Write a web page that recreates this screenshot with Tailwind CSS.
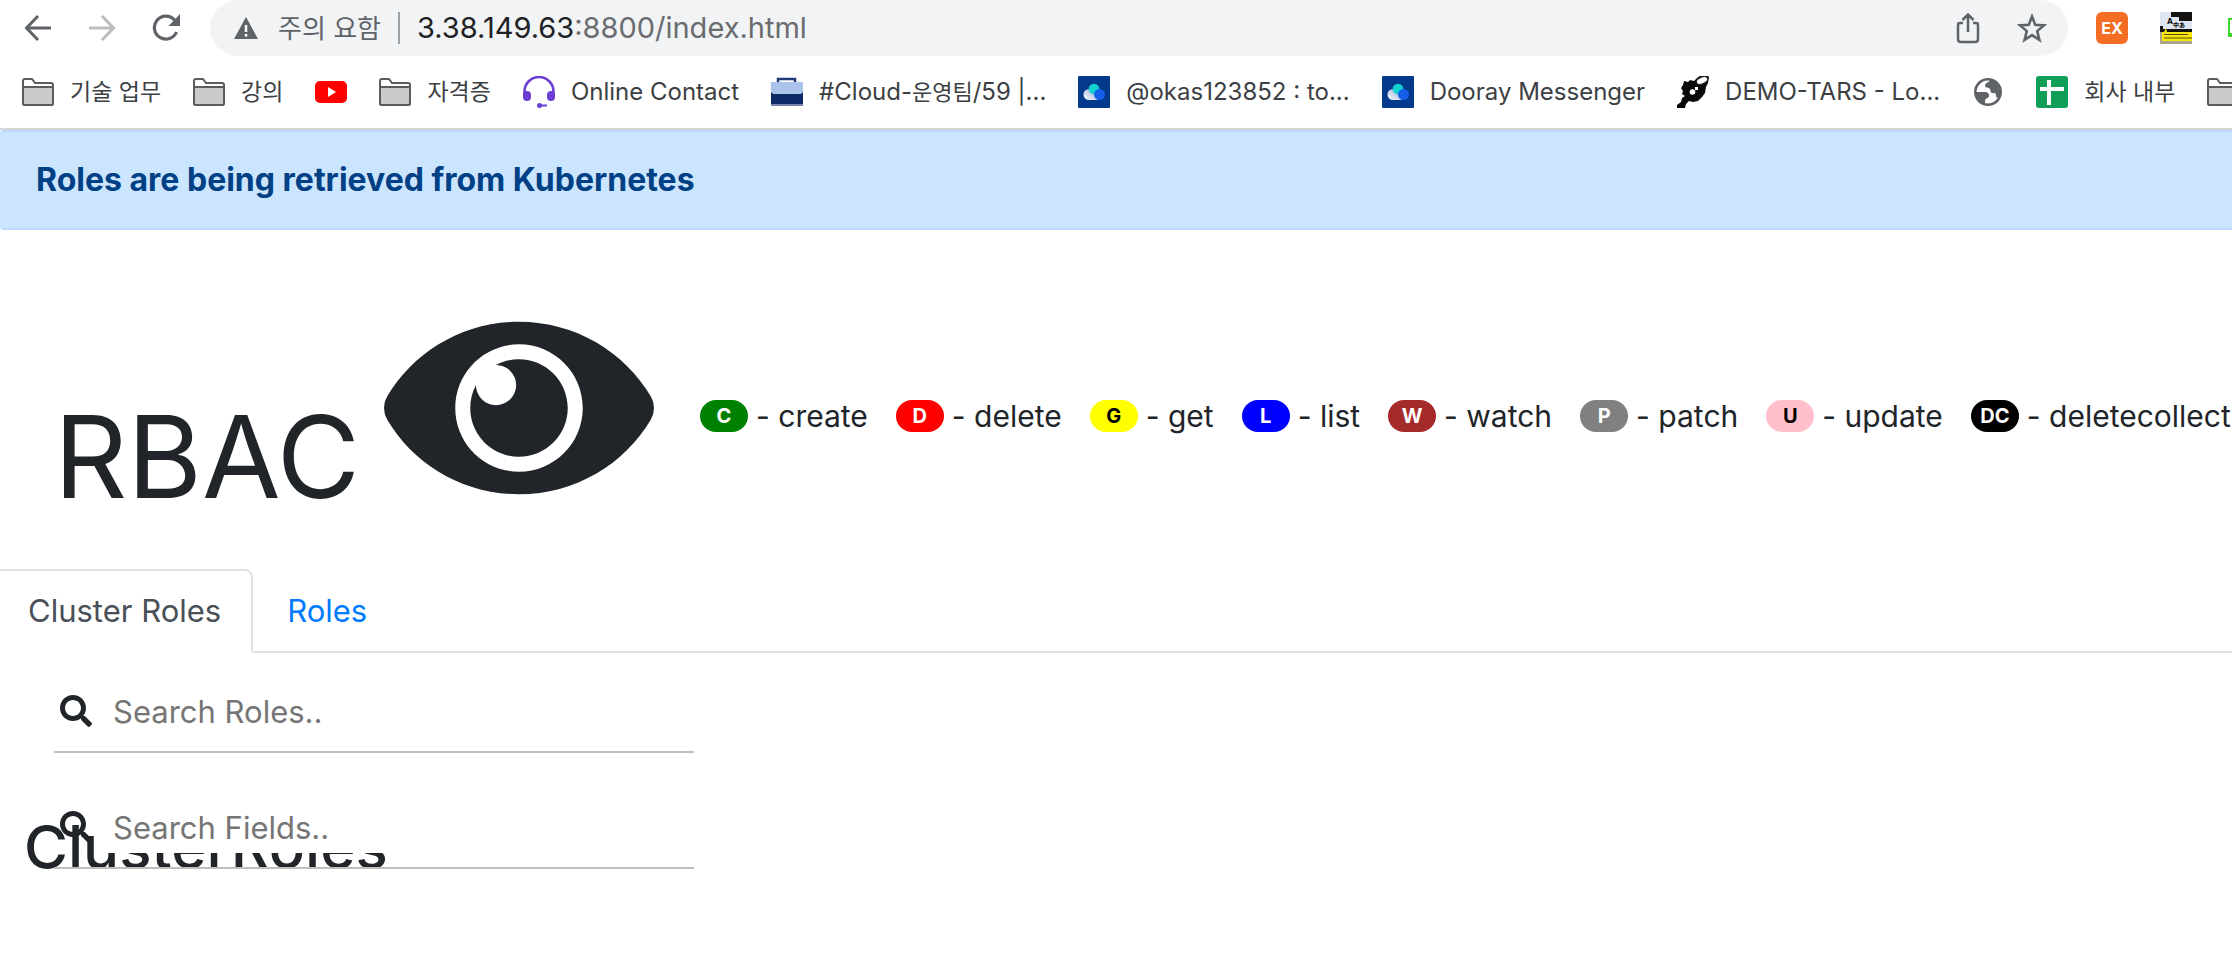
<!DOCTYPE html>
<html lang="ko">

<head>
  <meta charset="UTF-8" />
  <meta name="viewport" content="width=device-width, initial-scale=1.0" />
  <title>RBAC View</title>
  <script src="https://cdn.jsdelivr.net/npm/@tailwindcss/browser@4"></script>
</head>

<body class="bg-white text-[#212529] font-[Inter,'Noto_Sans_CJK_KR',sans-serif] text-[31px] overflow-x-hidden">

  <!-- Icons used more than once -->
  <svg class="absolute w-0 h-0">
    <linearGradient id="cloud" x1="1" y1="0" x2="0" y2="1"><stop offset="0" stop-color="#8fa3d0" /><stop offset="1" stop-color="#fff" /></linearGradient>
    <symbol id="folder" viewBox="0 0 32 28">
      <path d="M1 25V3q0-2 2-2h7l3 4h16q2 0 2 2v18q0 2-2 2H3q-2 0-2-2z" fill="#fff" stroke="#5b5c5e" stroke-width="2" />
      <path d="M1 9h30v16q0 2-2 2H3q-2 0-2-2z" fill="#cbcbcb" stroke="#5b5c5e" stroke-width="2" />
    </symbol>
    <symbol id="dooray" viewBox="0 0 32 32">
      <rect width="32" height="32" rx="1" fill="#043a8c" />
      <path d="M11 13a5.500 5.500 0 0 0 0 11h9V13z" fill="url(#cloud)" />
      <circle cx="16" cy="13" r="5.300" fill="#12d2cf" />
      <circle cx="21.500" cy="18.500" r="5.500" fill="#145eea" />
    </symbol>
    <symbol id="search" viewBox="0 0 512 512">
      <path fill="currentColor" d="M505 442.700L405.300 343c-4.500-4.500-10.600-7-17-7H372c27.600-35.300 44-79.700 44-128C416 93.100 322.900 0 208 0S0 93.100 0 208s93.100 208 208 208c48.300 0 92.700-16.400 128-44v16.300c0 6.400 2.500 12.500 7 17l99.700 99.700c9.400 9.400 24.600 9.400 33.900 0l28.300-28.300c9.400-9.400 9.400-24.600.1-34zM208 336c-70.700 0-128-57.200-128-128 0-70.700 57.200-128 128-128 70.700 0 128 57.200 128 128 0 70.700-57.200 128-128 128z" />
    </symbol>
  </svg>

  <!-- Browser toolbar -->
  <div class="flex items-center h-14 pl-6 overflow-hidden text-[#5f6368]">
    <button aria-label="Back" class="shrink-0 mr-9">
      <svg class="w-7 h-7" viewBox="0 0 28 28" fill="none" stroke="#5f6368" stroke-width="3"><path d="M27 14H3M14 2L2.500 14 14 26" /></svg>
    </button>
    <button aria-label="Forward" class="shrink-0 mr-9">
      <svg class="w-7 h-7" viewBox="0 0 28 28" fill="none" stroke="#bbbdbf" stroke-width="3"><path d="M1 14h24M14 2l11.500 12L14 26" /></svg>
    </button>
    <button aria-label="Reload" class="shrink-0 mr-[30px]">
      <svg class="w-7 h-7" viewBox="0 0 28 28"><path d="M22.500 6A11.500 11.500 0 1 0 24.500 18" fill="none" stroke="#5f6368" stroke-width="3.200" /><path d="M28 0v12H16.500z" fill="#5f6368" /></svg>
    </button>
    <div class="flex items-center flex-1 h-14 pl-6 pr-5 rounded-full bg-[#f1f3f4] text-[26px]">
      <svg class="w-6 h-6 mr-5" viewBox="0 0 24 24"><path d="M12 1l12 22H0z" fill="#5f6368" /><path d="M10.800 9h2.500v7h-2.500zM10.800 18h2.500v2.500h-2.500z" fill="#fff" /></svg>
      <span>주의 요함</span>
      <span class="w-[2px] h-8 mx-[17px] bg-[#9aa0a6]"></span>
      <span class="text-[#202124] text-[29px]">3.38.149.63<span class="text-[#6a6c6f]">:8800/index.html</span></span>
      <button aria-label="Share" class="ml-auto mr-9">
        <svg class="w-6 h-8" viewBox="0 0 24 32" fill="none" stroke="#5f6368" stroke-width="2.500"><path d="M7 11H4q-2 0-2 2v14q0 3 3 3h14q3 0 3-3V13q0-2-2-2h-3M12 20V3M6.500 8L12 2.500 17.500 8" /></svg>
      </button>
      <button aria-label="Bookmark this page">
        <svg class="w-8 h-8" viewBox="0 0 32 32" fill="none" stroke="#5f6368" stroke-width="2.600"><path d="M16 4.500l3.200 8.200 8.800.7-6.800 5.700 2.200 8.700-7.400-4.700-7.400 4.700 2.200-8.700L4 13.400l8.800-.7z" /></svg>
      </button>
    </div>
    <div class="flex items-center gap-8 pl-7 shrink-0">
      <button class="w-8 h-8 rounded-md bg-[#f36d24] text-white text-base font-bold">EX</button>
      <svg class="w-8 h-8" viewBox="0 0 32 32">
        <rect width="32" height="32" fill="#a9a48c" /><rect width="32" height="20" fill="#15130f" />
        <path d="M0 0h11v5h8v4h13v8H3V14H0z" fill="#dfe5f2" />
        <path d="M2 20h2l2-4 1 4h25v9H2z" fill="#f7e60a" />
        <path d="M4 22.500h24M4 26h28" stroke="#554f10" stroke-width="1" />
        <text x="7" y="12" font-size="8" font-weight="700" fill="#000">A</text>
        <text x="13" y="15" font-size="6" font-weight="700" fill="#000" font-family="Noto Sans CJK JP">中あ</text>
      </svg>
      <svg class="w-4 h-5 ml-1 -mr-3" viewBox="0 0 16 20"><rect x="1" y="1" width="20" height="17" fill="#fff" stroke="#3bd32c" stroke-width="2" /><path d="M0 15h16v4H0z" fill="#3bd32c" /></svg>
    </div>
  </div>

  <!-- Bookmarks bar -->
  <nav class="flex items-center gap-8 h-[74px] pl-[22px] border-b-2 border-[#d5d7da] overflow-hidden whitespace-nowrap text-2xl text-[#3c4043]">
    <a href="#" class="flex items-center shrink-0 text-[23px]"><svg class="w-8 h-7 mr-4"><use href="#folder" /></svg>기술 업무</a>
    <a href="#" class="flex items-center shrink-0 text-[23px]"><svg class="w-8 h-7 mr-4"><use href="#folder" /></svg>강의</a>
    <a href="#" aria-label="YouTube" class="shrink-0"><svg class="w-8 h-6" viewBox="0 0 32 24"><rect y="1" width="32" height="22" rx="5" fill="#f00" /><path d="M13 7l8 5-8 5z" fill="#fff" /></svg></a>
    <a href="#" class="flex items-center shrink-0 text-[23px]"><svg class="w-8 h-7 mr-4"><use href="#folder" /></svg>자격증</a>
    <a href="#" class="flex items-center shrink-0">
      <svg class="w-8 h-8 mr-4" viewBox="0 0 32 32"><path d="M1.500 19v-3.500a14.500 14.500 0 0 1 29 0V19" fill="none" stroke="#6b3fd4" stroke-width="2.600" /><rect y="15" width="8" height="10" rx="4" fill="#6b3fd4" /><rect x="24" y="15" width="8" height="10" rx="4" fill="#6b3fd4" /><circle cx="16.500" cy="29.500" r="2.500" fill="#6b3fd4" /><path d="M17 28.500h7v2h-7z" fill="#6b3fd4" /></svg>Online Contact
    </a>
    <a href="#" class="flex items-center shrink-0">
      <svg class="w-8 h-8 mr-4" viewBox="0 0 32 32"><path d="M7 7V3h17v4" fill="none" stroke="#1f3b78" stroke-width="2.500" /><path d="M0 6h32v12H0z" fill="#abc2ea" /><path d="M0 16l2 2h28l2-2v12H0z" fill="#0b2a66" /><path d="M0 28h32v2H0z" fill="#7484ab" /></svg><span>#Cloud-<span class="text-[22px]">운영팀</span>/59 |...</span>
    </a>
    <a href="#" class="flex items-center shrink-0"><svg class="w-8 h-8 mr-4"><use href="#dooray" /></svg>@okas123852 : to...</a>
    <a href="#" class="flex items-center shrink-0"><svg class="w-8 h-8 mr-4"><use href="#dooray" /></svg>Dooray Messenger</a>
    <a href="#" class="flex items-center shrink-0">
      <svg class="w-8 h-8 mr-4" viewBox="0 0 32 32"><path d="M0 32v-3l4-3 1-4 3-2-3-2 1-3-2-3 2-3 1-4 4 1 2-2 4 1 3-3 4-3h6l2 2-1 6-2 4-1 6-3 4-4 4-5 1-4-1-3 3-1 4-4 1z" fill="#0a0a0a" /><ellipse cx="25" cy="4.500" rx="6" ry="3.400" transform="rotate(-24 25 4.500)" fill="#fff" stroke="#222" stroke-width="1.300" /><circle cx="15.500" cy="16" r="2.800" fill="#fff" /><path d="M18 11h3v3h-3z" fill="#fff" /></svg>DEMO-TARS - Lo...
    </a>
    <a href="#" aria-label="Web page" class="shrink-0 px-[2px]">
      <svg class="w-7 h-7" viewBox="0 0 28 28"><circle cx="14" cy="14" r="12.700" fill="#fff" stroke="#5f6368" stroke-width="2.600" /><path d="M16 1c0 4-5 3-5 7 0 2 4 1 5 3s0 4 3 4 3 1 3 3 2 2 4 0q2-4 1-8Q24 2 16 1zM1 14h9c4 0 5 1 5 4 0 2-4 2-4 5v4Q2 24 1 14z" fill="#5f6368" /></svg>
    </a>
    <a href="#" class="flex items-center shrink-0 text-[23px]">
      <svg class="w-8 h-8 mr-4" viewBox="0 0 32 32"><rect width="32" height="32" rx="3" fill="#0f9d58" /><path d="M11 4h4v7h13v4H15v14h-4V15H4v-4h7z" fill="#fff" /></svg>회사 내부
    </a>
    <a href="#" aria-label="Folder" class="shrink-0"><svg class="w-8 h-7"><use href="#folder" /></svg></a>
  </nav>

  <!-- Status message -->
  <div role="alert" class="px-9 py-6 text-[32px] leading-[48px] font-bold text-[#004085] bg-[#cce5ff] border-y-2 border-[#b8daff] rounded-l-sm">
    Roles are being retrieved from Kubernetes
  </div>

  <!-- Title and legend -->
  <header class="flex items-center pl-[54px] pt-[58px] pb-[41px] whitespace-nowrap">
    <h1 class="shrink-0 text-[114px] leading-none">RBAC<svg class="inline-block align-[-30px] w-[270px] h-60 ml-6" viewBox="0 0 576 512" fill="currentColor"><path d="M569.354 231.631C512.969 135.949 407.810 72 288 72 168.140 72 63.004 135.994 6.646 231.631a47.999 47.999 0 0 0 0 48.739C63.031 376.051 168.190 440 288 440c119.860 0 224.996-63.994 281.354-159.631a47.997 47.997 0 0 0 0-48.738zM288 392c-75.162 0-136-60.827-136-136 0-75.162 60.826-136 136-136 75.162 0 136 60.826 136 136 0 75.162-60.826 136-136 136zm104-136c0 57.438-46.562 104-104 104s-104-46.562-104-104c0-17.708 4.431-34.379 12.236-48.973l-.001.032c0 23.651 19.173 42.823 42.824 42.823s42.824-19.173 42.824-42.823c0-23.651-19.173-42.823-42.824-42.823l-.032.001C253.621 156.431 270.292 152 288 152c57.438 0 104 46.562 104 104z" /></svg></h1>
    <ul class="flex items-center gap-7 ml-[46px] pt-4 text-[30px]">
      <li class="flex items-center gap-2"><span class="w-12 h-8 rounded-full bg-[green] text-white text-xl leading-8 font-bold text-center">C</span>- create</li>
      <li class="flex items-center gap-2"><span class="w-12 h-8 rounded-full bg-[red] text-white text-xl leading-8 font-bold text-center">D</span>- delete</li>
      <li class="flex items-center gap-2"><span class="w-12 h-8 rounded-full bg-[yellow] text-black text-xl leading-8 font-bold text-center">G</span>- get</li>
      <li class="flex items-center gap-2"><span class="w-12 h-8 rounded-full bg-[blue] text-white text-xl leading-8 font-bold text-center">L</span>- list</li>
      <li class="flex items-center gap-2"><span class="w-12 h-8 rounded-full bg-[brown] text-white text-xl leading-8 font-bold text-center">W</span>- watch</li>
      <li class="flex items-center gap-2"><span class="w-12 h-8 rounded-full bg-[gray] text-white text-xl leading-8 font-bold text-center">P</span>- patch</li>
      <li class="flex items-center gap-2"><span class="w-12 h-8 rounded-full bg-[pink] text-black text-xl leading-8 font-bold text-center">U</span>- update</li>
      <li class="flex items-center gap-2"><span class="w-12 h-8 rounded-full bg-black text-white text-xl leading-8 font-bold text-center">DC</span>- deletecollection</li>
    </ul>
  </header>

  <!-- Tabs -->
  <div class="flex leading-[48px] border-b-2 border-[#dee2e6]">
    <a href="#cluster-roles" class="pl-7 pr-[30px] py-4 -mb-[2px] bg-white text-[#495057] border-2 border-l-0 border-[#dee2e6] border-b-white rounded-tr-lg">Cluster Roles</a>
    <a href="#roles" class="px-8 py-4 -mb-[2px] text-[#007bff] border-2 border-transparent">Roles</a>
  </div>

  <!-- Search boxes, lying over the section heading -->
  <main id="cluster-roles" class="relative">
    <form class="flex flex-col gap-4 pl-[54px]">
      <label class="flex items-center w-[640px] h-[100px] pl-[6px] pt-[18px] border-b-2 border-[#bfbfbf]">
        <svg class="w-8 h-8 mr-2"><use href="#search" /></svg>
        <input type="text" aria-label="Search Roles" placeholder="Search Roles.." class="flex-1 h-[52px] pl-[13px] bg-white placeholder:text-[#757575] outline-none" />
      </label>
      <label class="flex items-center w-[640px] h-[100px] pl-[6px] pt-[18px] border-b-2 border-[#bfbfbf]">
        <svg class="w-8 h-8 mr-2"><use href="#search" /></svg>
        <input type="text" aria-label="Search Fields" placeholder="Search Fields.." class="flex-1 h-[52px] pl-[13px] bg-white placeholder:text-[#757575] outline-none" />
      </label>
    </form>
    <h2 class="absolute -z-10 -bottom-2 left-6 text-[60px] leading-none font-medium">ClusterRoles</h2>
  </main>

</body>

</html>
